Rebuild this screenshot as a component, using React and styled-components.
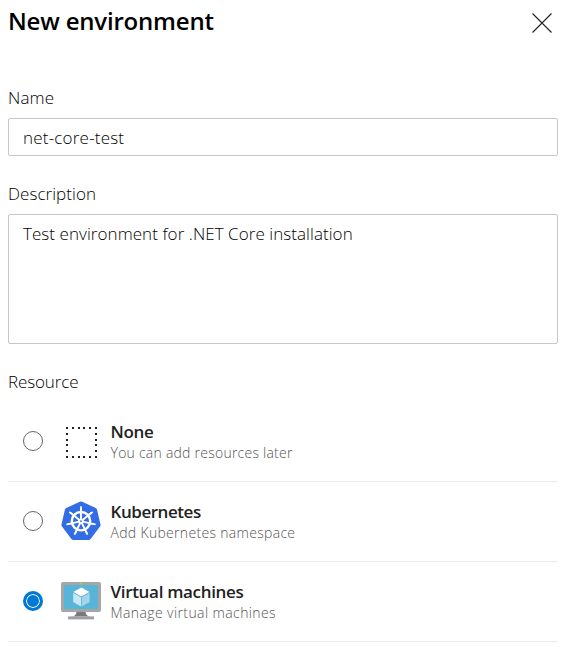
import React, { useState } from "react";
import styled, { createGlobalStyle } from "styled-components";

const GlobalStyle = createGlobalStyle`
  * { box-sizing: border-box; }
  body { margin: 0; background: #fff; font-family: "Open Sans", "Noto Sans", sans-serif; }
`;

const Panel = styled.main`
  width: 567px;
  height: 657px;
  padding: 0 9px 0 8px;
  overflow: hidden;
  background: #fff;
`;

const Header = styled.header`
  display: flex;
  justify-content: space-between;
  height: 82px;
`;

const Title = styled.h1`
  margin: 5px 0 0 0;
  font-size: 24px;
  line-height: 32px;
  font-weight: 600;
  letter-spacing: -0.2px;
  color: #000;
  white-space: nowrap;
`;

const CloseButton = styled.button`
  width: 32px;
  height: 32px;
  margin-top: 7px;
  padding: 0;
  border: 0;
  background: none;
  svg { display: block; }
`;

const Field = styled.div`
  display: flex;
  flex-direction: column;
  height: ${(p) => p.$height}px;
`;

const Label = styled.label`
  height: 36px;
  font-size: 17px;
  line-height: 32px;
  font-weight: 300;
  letter-spacing: ${(p) => p.$tracking}px;
  color: #000;
`;

const TextInput = styled.input`
  height: 38px;
  width: 100%;
  padding: 0 14px;
  border: 1px solid #c8c8c8;
  border-radius: 2px;
  outline: 0;
  font: 300 17px "Open Sans", sans-serif;
  letter-spacing: 0.2px;
  color: #000;
`;

const TextArea = styled.textarea`
  height: 130px;
  width: 100%;
  padding: 6px 14px;
  border: 1px solid #c8c8c8;
  border-radius: 2px;
  outline: 0;
  resize: none;
  font: 300 17px/26px "Open Sans", sans-serif;
  letter-spacing: 0.06px;
  color: #000;
`;

const Row = styled.label`
  display: flex;
  align-items: center;
  height: 80px;
  padding-left: 15px;
  border-bottom: 1px solid #eaeaea;
`;

const Radio = styled.input`
  appearance: none;
  width: 20px;
  height: 20px;
  margin: 0 18px 1px 0;
  border: 1px solid #666;
  border-radius: 50%;
  &:checked {
    border: 3px solid #0078d4;
    background: #0078d4;
    box-shadow: inset 0 0 0 1px #fff;
  }
`;

const IconBox = styled.span`
  display: block;
  width: 40px;
  height: 40px;
  margin: 0 9.5px 1px 0;
  svg { display: block; }
`;

const RowText = styled.span`
  display: flex;
  flex-direction: column;
  white-space: nowrap;
`;

const RowTitle = styled.span`
  font-size: 17px;
  line-height: 22px;
  font-weight: 600;
  letter-spacing: ${(p) => p.$tracking}px;
  color: #222;
`;

const RowHint = styled.span`
  font-size: 14px;
  line-height: 20px;
  font-weight: 300;
  letter-spacing: ${(p) => p.$tracking}px;
  color: #555;
`;

const EmptyIcon = () => {
  const steps = [5, 11, 17, 22, 28, 34];
  return (
    <svg width="40" height="40" fill="#222">
      {steps.flatMap((x) =>
        steps
          .filter((y) => x === 5 || x === 34 || y === 5 || y === 34)
          .map((y) => <rect key={`${x}-${y}`} x={x} y={y + 1} width="2" height="2" />)
      )}
    </svg>
  );
};

const KubernetesIcon = () => (
  <svg width="40" height="40" viewBox="0 0 40 40">
    <path
      d="M18.8.7Q20 .2 21.2.7L34.7 7Q35.8 7.6 36.1 8.7L39.5 23.4Q39.7 24.7 39 25.6L29.6 37.9Q28.8 38.9 27.5 38.9H12.5Q11.2 38.9 10.4 37.9L1 25.6Q.3 24.7.5 23.4L3.9 8.7Q4.2 7.6 5.3 7Z"
      fill="#326de6"
    />
    <g transform="translate(20 20.2)" stroke="#fff" fill="none">
      <circle r="9.2" strokeWidth="2.4" />
      {[0, 1, 2, 3, 4, 5, 6].map((i) => (
        <g key={i} transform={`rotate(${(i * 360) / 7})`}>
          <path d="M0-2V-13" strokeWidth="1.9" strokeLinecap="round" />
          <path d="M0-15V-11" strokeWidth="1.7" />
        </g>
      ))}
      <circle r="2.8" fill="#fff" stroke="none" />
      <circle r=".9" fill="#326de6" stroke="none" />
    </g>
  </svg>
);

const MachineIcon = () => (
  <svg width="40" height="40" viewBox="0 0 40 40">
    <path d="M15.6 30H24.4Q24.4 34.8 29 35.6H11Q15.6 34.8 15.6 30Z" fill="#7a7a7a" />
    <rect x="7" y="35.4" width="26" height="3" fill="#a0a0a0" />
    <rect y="1" width="40" height="30" rx="2" fill="#a6a6a6" />
    <rect x="3" y="4" width="34" height="24" fill="#59b4d9" />
    <circle cx="20" cy="2.6" r="1" fill="#b8d432" />
    <path d="M20.4 6.5L28.4 11L20.4 15.5L12.4 11Z" fill="#fff" />
    <path d="M12.2 11.9L20 16.2V25.4L12.2 21Z" fill="#c9e7f3" />
    <path d="M28.6 11.9L20.8 16.2V25.4L28.6 21Z" fill="#a4d5e9" />
  </svg>
);

const resources = [
  { id: "none", title: "None", hint: "You can add resources later", Icon: EmptyIcon, titleTracking: -0.3, hintTracking: 0.24 },
  { id: "k8s", title: "Kubernetes", hint: "Add Kubernetes namespace", Icon: KubernetesIcon, titleTracking: -0.45, hintTracking: 0.31 },
  { id: "vm", title: "Virtual machines", hint: "Manage virtual machines", Icon: MachineIcon, titleTracking: -0.32, hintTracking: 0.4 },
];

export default function App() {
  const [selected, setSelected] = useState("vm");
  return (
    <Panel>
      <GlobalStyle />
      <Header>
        <Title>New environment</Title>
        <CloseButton aria-label="Close">
          <svg width="32" height="32" stroke="#222" strokeWidth="1.1">
            <path d="M6.5 6.5L25.5 25.5M25.5 6.5L6.5 25.5" />
          </svg>
        </CloseButton>
      </Header>
      <Field $height={96}>
        <Label htmlFor="name" $tracking={0.15}>Name</Label>
        <TextInput id="name" defaultValue="net-core-test" />
      </Field>
      <Field $height={188}>
        <Label htmlFor="description" $tracking={0.05}>Description</Label>
        <TextArea id="description" spellCheck={false} defaultValue="Test environment for .NET Core installation" />
      </Field>
      <Field $height={36}>
        <Label as="span" $tracking={-0.12}>Resource</Label>
      </Field>
      {resources.map(({ id, title, hint, Icon, titleTracking, hintTracking }) => (
        <Row key={id}>
          <Radio type="radio" name="resource" checked={selected === id} onChange={() => setSelected(id)} />
          <IconBox><Icon /></IconBox>
          <RowText>
            <RowTitle $tracking={titleTracking}>{title}</RowTitle>
            <RowHint $tracking={hintTracking}>{hint}</RowHint>
          </RowText>
        </Row>
      ))}
    </Panel>
  );
}
